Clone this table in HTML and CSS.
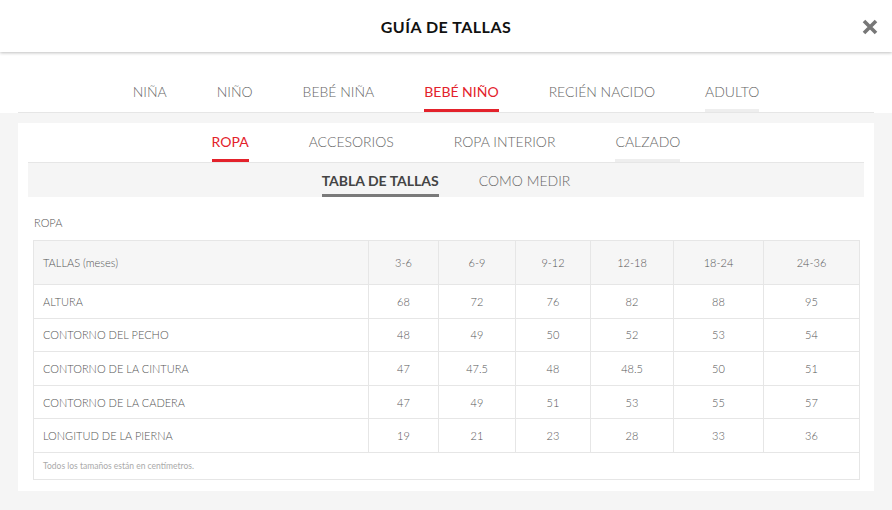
FILE: index.html
```html
<!DOCTYPE html>
<html>
<head>
    <title>Guía de tallas</title>
    <link rel="stylesheet" href="styles.css">
</head>
<body>
    <div class="header">
        <h1 class="title">GUÍA DE TALLAS</h1>
        <span class="close">
            <svg width="18" height="18" viewBox="0 0 18 18">
                <path d="M3 3L15 15M15 3L3 15" stroke="#777" stroke-width="3.6" stroke-linecap="butt"/>
            </svg>
        </span>
    </div>

    <div class="wrap">
        <div class="tabs main-tabs">
            <span class="tab">NIÑA</span>
            <span class="tab">NIÑO</span>
            <span class="tab">BEBÉ NIÑA</span>
            <span class="tab active">BEBÉ NIÑO</span>
            <span class="tab">RECIÉN NACIDO</span>
            <span class="tab hover">ADULTO</span>
        </div>
    </div>

    <div class="grey">
        <div class="panel">
            <div class="tabs sub-tabs">
                <span class="tab active">ROPA</span>
                <span class="tab">ACCESORIOS</span>
                <span class="tab">ROPA INTERIOR</span>
                <span class="tab hover">CALZADO</span>
            </div>
            <div class="switch">
                <span class="switch-item selected">TABLA DE TALLAS</span>
                <span class="switch-item">COMO MEDIR</span>
            </div>

            <p class="label">ROPA</p>

            <table class="sizes">
                <colgroup>
                    <col><col><col><col><col><col><col>
                </colgroup>
                <tr class="head">
                    <td>TALLAS (meses)</td>
                    <td>3-6</td><td>6-9</td><td>9-12</td><td>12-18</td><td>18-24</td><td>24-36</td>
                </tr>
                <tr>
                    <td>ALTURA</td>
                    <td>68</td><td>72</td><td>76</td><td>82</td><td>88</td><td>95</td>
                </tr>
                <tr>
                    <td>CONTORNO DEL PECHO</td>
                    <td>48</td><td>49</td><td>50</td><td>52</td><td>53</td><td>54</td>
                </tr>
                <tr>
                    <td>CONTORNO DE LA CINTURA</td>
                    <td>47</td><td>47.5</td><td>48</td><td>48.5</td><td>50</td><td>51</td>
                </tr>
                <tr>
                    <td>CONTORNO DE LA CADERA</td>
                    <td>47</td><td>49</td><td>51</td><td>53</td><td>55</td><td>57</td>
                </tr>
                <tr>
                    <td>LONGITUD DE LA PIERNA</td>
                    <td>19</td><td>21</td><td>23</td><td>28</td><td>33</td><td>36</td>
                </tr>
                <tr class="note">
                    <td colspan="7">Todos los tamaños están en centímetros.</td>
                </tr>
            </table>
        </div>
    </div>
</body>
</html>
```

FILE: styles.css
```css
body{
    margin: 0;
    background-color: white;
    font-family: Lato, "Open Sans", sans-serif;
    color: #666;
}
.header{
    height: 52px;
    display: flex;
    align-items: center;
    justify-content: center;
    position: relative;
    box-shadow: 0 1px 3px rgba(0,0,0,0.25);
    background-color: white;
    z-index: 1;
}
.title{
    margin: 0;
    font-size: 16px;
    font-weight: 700;
    color: #111;
    letter-spacing: 0.5px;
}
.close{
    position: absolute;
    right: 13px;
    top: 18px;
    width: 18px;
    height: 18px;
}
.wrap{
    padding: 0 18px;
}
.tabs{
    display: flex;
    justify-content: center;
    align-items: flex-end;
    border-bottom: 1px solid #e6e6e6;
}
.main-tabs{
    height: 60px;
    gap: 50px;
}
.tab{
    font-size: 14px;
    line-height: 17px;
    font-weight: 300;
    color: #666;
    padding-bottom: 9px;
    border-bottom: 3px solid transparent;
}
.tab.active{
    font-weight: 400;
    color: #e3222b;
    border-bottom-color: #e3222b;
}
.tab.hover{
    border-bottom-color: #eeeeee;
}
.grey{
    background-color: #f5f5f5;
    padding: 10px 18px 20px;
}
.panel{
    background-color: white;
    padding: 0 10px 11px;
}
.sub-tabs{
    height: 39px;
    gap: 60px;
}
.switch{
    background-color: #f5f5f5;
    height: 34px;
    display: flex;
    justify-content: center;
    align-items: flex-end;
    gap: 40px;
}
.switch-item{
    font-size: 14px;
    line-height: 17px;
    font-weight: 300;
    color: #666;
    padding-bottom: 5px;
    border-bottom: 3px solid transparent;
}
.switch-item.selected{
    color: #444;
    font-weight: 700;
    border-bottom-color: #7a7a7a;
}
.label{
    margin: 19px 6px 10px;
    font-size: 11px;
    line-height: 14px;
    font-weight: 300;
    color: #555;
}
.sizes{
    margin: 0 5px;
    width: 826px;
    border-collapse: collapse;
    table-layout: fixed;
    font-size: 11px;
    font-weight: 300;
    color: #555;
}
.sizes col:nth-child(1){ width: 335px; }
.sizes col:nth-child(2){ width: 70px; }
.sizes col:nth-child(3){ width: 77px; }
.sizes col:nth-child(4){ width: 75px; }
.sizes col:nth-child(5){ width: 83px; }
.sizes col:nth-child(6){ width: 90px; }
.sizes col:nth-child(7){ width: 96px; }
.sizes td{
    border: 1px solid #e6e6e6;
    text-align: center;
    height: 32.6px;
    padding: 0;
}
.sizes td:first-child{
    text-align: left;
    padding-left: 9px;
}
.sizes .head td{
    background-color: #f6f6f6;
    height: 43px;
}
.sizes .note td{
    height: 26px;
    font-size: 8.5px;
    font-weight: 400;
    color: #aaa;
}
```
